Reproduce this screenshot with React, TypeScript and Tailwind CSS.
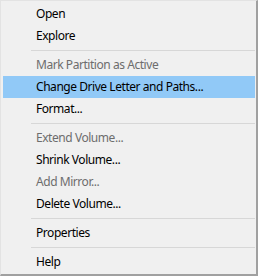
type Item = { label: string; disabled?: boolean; active?: boolean } | "sep";

const items: Item[] = [
  { label: "Open" },
  { label: "Explore" },
  "sep",
  { label: "Mark Partition as Active", disabled: true },
  { label: "Change Drive Letter and Paths...", active: true },
  { label: "Format..." },
  "sep",
  { label: "Extend Volume...", disabled: true },
  { label: "Shrink Volume..." },
  { label: "Add Mirror...", disabled: true },
  { label: "Delete Volume..." },
  "sep",
  { label: "Properties" },
  "sep",
  { label: "Help" },
];

export default function App() {
  return (
    <div className="w-[258px] h-[276px] bg-[#f0f0f0] border-l border-t border-[#e3e3e3] border-r-2 border-b-2 border-r-[#a0a0a0] border-b-[#a0a0a0] pt-[2px] pl-[2px] pr-px font-['Segoe_UI','Noto_Sans',sans-serif] text-[12px] tracking-[-0.45px]">
      {items.map((it, i) =>
        it === "sep" ? (
          <div key={i} className="h-[7px] pt-[3px] pl-[28px]">
            <div className="h-px bg-[#d7d7d7]" />
          </div>
        ) : (
          <div
            key={i}
            className={`h-[22px] flex items-center pl-[33px] ${it.active ? "bg-[#91c9f7]" : ""} ${it.disabled ? "text-[#6d6d6d]" : "text-black"}`}
          >
            {it.label}
          </div>
        )
      )}
    </div>
  );
}
